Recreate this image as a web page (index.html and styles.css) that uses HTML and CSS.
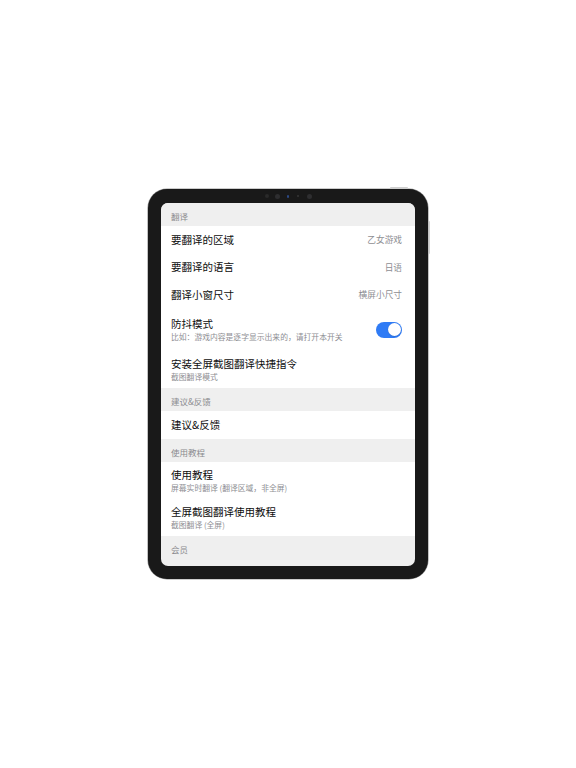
FILE: index.html
```html
<!DOCTYPE html>
<html lang="zh-CN">
<head>
<meta charset="utf-8">
<link rel="stylesheet" href="styles.css">
</head>
<body>
<div class="stage">
  <div class="device">
    <div class="top-button"></div>
    <div class="side-buttons"></div>
    <div class="camera-row">
      <span class="dot d1"></span>
      <span class="dot d2"></span>
      <span class="dot d3"></span>
      <span class="dot d4"></span>
      <span class="dot d5"></span>
    </div>
    <div class="screen">
      <div class="section-head">翻译</div>
      <div class="row single"><span class="title">要翻译的区域</span><span class="value">乙女游戏</span></div>
      <div class="row single"><span class="title">要翻译的语言</span><span class="value">日语</span></div>
      <div class="row single"><span class="title">翻译小窗尺寸</span><span class="value">横屏小尺寸</span></div>
      <div class="row double tall">
        <div class="texts"><span class="title">防抖模式</span><span class="sub">比如：游戏内容是逐字显示出来的，请打开本开关</span></div>
        <span class="toggle"><span class="knob"></span></span>
      </div>
      <div class="row double">
        <div class="texts"><span class="title">安装全屏截图翻译快捷指令</span><span class="sub">截图翻译模式</span></div>
      </div>
      <div class="section-head">建议&amp;反馈</div>
      <div class="row single last-single"><span class="title">建议&amp;反馈</span></div>
      <div class="section-head">使用教程</div>
      <div class="row double">
        <div class="texts"><span class="title">使用教程</span><span class="sub">屏幕实时翻译 (翻译区域，非全屏)</span></div>
      </div>
      <div class="row double">
        <div class="texts"><span class="title">全屏截图翻译使用教程</span><span class="sub">截图翻译 (全屏)</span></div>
      </div>
      <div class="section-head">会员</div>
    </div>
  </div>
</div>
</body>
</html>
```
FILE: styles.css
```css
html, body {
  margin: 0;
  padding: 0;
  background: #ffffff;
}
body {
  font-family: "Noto Sans CJK SC", "Noto Sans", sans-serif;
}
.stage {
  width: 576px;
  height: 768px;
  display: flex;
  align-items: center;
  justify-content: center;
}
.device {
  position: relative;
  width: 280px;
  height: 390px;
  box-sizing: border-box;
  background: #191919;
  border-radius: 19px;
  box-shadow: 0 0 0 0.6px #9a9a9a;
  padding: 0 13px 13px 13px;
  display: flex;
  flex-direction: column;
}
.top-button {
  position: absolute;
  top: -2px;
  left: 242px;
  width: 18px;
  height: 2px;
  background: #cfcfcf;
  border-radius: 1px 1px 0 0;
}
.side-buttons {
  position: absolute;
  right: -2px;
  top: 32px;
  width: 1.5px;
  height: 33px;
  background: #d4d4d4;
  border-radius: 0 1px 1px 0;
}
.camera-row {
  height: 14px;
  flex: none;
  display: flex;
  align-items: center;
  justify-content: center;
}
.dot {
  display: block;
  border-radius: 50%;
  background: #2c2c2e;
}
.d1 { width: 4px; height: 4px; margin-right: 6px; background: #2a2a2a; }
.d2 { width: 5px; height: 5px; margin-right: 7px; background: #2e2e30; }
.d3 { width: 2.5px; height: 3px; margin-right: 8px; background: #2d4a86; }
.d4 { width: 1.5px; height: 1.5px; margin-right: 8px; background: #333; }
.d5 { width: 5px; height: 5px; background: #2e2e30; }
.screen {
  flex: 1;
  background: #efefef;
  border-radius: 7px;
  overflow: hidden;
  display: flex;
  flex-direction: column;
}
.section-head {
  flex: none;
  height: 23px;
  box-sizing: border-box;
  padding: 8px 10px 0 10px;
  font-size: 8.5px;
  line-height: 10px;
  color: #8a8a8e;
  background: #efefef;
}
.row {
  flex: none;
  background: #ffffff;
  display: flex;
  align-items: center;
  justify-content: space-between;
  padding: 0 13px 0 10px;
  box-sizing: border-box;
}
.single {
  height: 27.5px;
}
.last-single {
  height: 28px;
}
.double {
  height: 37px;
}
.tall {
  height: 42.5px;
}
.texts {
  display: flex;
  flex-direction: column;
}
.title {
  font-size: 10.5px;
  line-height: 12px;
  color: #0d0d0d;
}
.sub {
  font-size: 7.8px;
  line-height: 9px;
  color: #8e8e93;
  margin-top: 2px;
}
.value {
  font-size: 8.7px;
  line-height: 11px;
  color: #8e8e93;
}
.toggle {
  width: 26px;
  height: 16px;
  border-radius: 8px;
  background: #2f7bf5;
  display: flex;
  align-items: center;
  justify-content: flex-end;
  padding: 0 1.5px;
  box-sizing: border-box;
}
.knob {
  width: 13px;
  height: 13px;
  border-radius: 50%;
  background: #ffffff;
  box-shadow: 0 0.5px 1px rgba(0,0,0,0.2);
}
```
